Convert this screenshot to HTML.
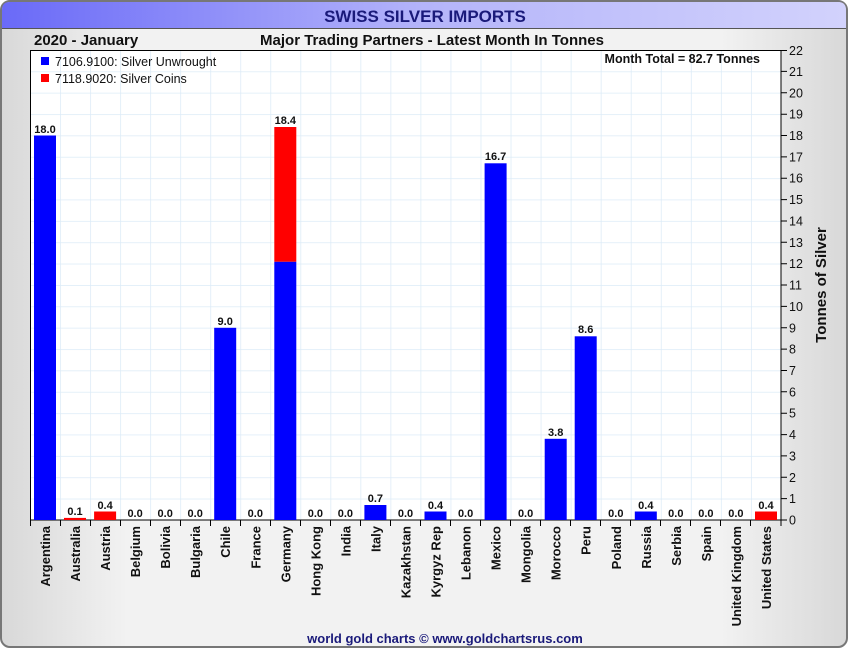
<!DOCTYPE html>
<html><head><meta charset="utf-8"><style>
html,body{margin:0;padding:0;background:#fff;}
svg{display:block;font-family:"Liberation Sans",Arial,sans-serif;}
</style></head><body>
<svg width="850" height="650" viewBox="0 0 850 650" xmlns="http://www.w3.org/2000/svg">
<defs>
<linearGradient id="bg" x1="0" y1="0" x2="1" y2="0">
<stop offset="0" stop-color="#d8d8d8"/><stop offset="0.15" stop-color="#f2f2f2"/><stop offset="0.85" stop-color="#f2f2f2"/><stop offset="1" stop-color="#d8d8d8"/></linearGradient>
<linearGradient id="tb" x1="0" y1="0" x2="1" y2="0">
<stop offset="0" stop-color="#6a6af8"/><stop offset="0.5" stop-color="#b4b4fa"/><stop offset="1" stop-color="#d2d2fc"/></linearGradient>
<pattern id="grid" patternUnits="userSpaceOnUse" x="30" y="50" width="30.04" height="21.364">
<rect width="30.04" height="21.364" fill="#fff"/>
<line x1="0" y1="0" x2="30.04" y2="0" stroke="#dcebf7" stroke-width="1.5"/>
<line x1="0" y1="0" x2="0" y2="21.364" stroke="#dcebf7" stroke-width="1.5"/>
</pattern>
</defs>
<rect x="1" y="1" width="846" height="646" rx="9" fill="url(#bg)" stroke="#777" stroke-width="2"/>
<path d="M2,28 L2,10 Q2,2 10,2 L838,2 Q846,2 846,10 L846,28 Z" fill="url(#tb)"/>
<line x1="2" y1="28.5" x2="846" y2="28.5" stroke="#555" stroke-width="1"/>
<text x="425" y="22" text-anchor="middle" font-size="17" font-weight="bold" fill="#1a1a7a">SWISS SILVER IMPORTS</text>
<text x="34" y="45" font-size="15" font-weight="bold" fill="#111">2020 - January</text>
<text x="432" y="45" text-anchor="middle" font-size="15" font-weight="bold" fill="#111">Major Trading Partners - Latest Month In Tonnes</text>

<rect x="30.5" y="50.5" width="750.5" height="469.5" fill="url(#grid)" stroke="#000" stroke-width="1"/>

<!-- legend -->
<rect x="41" y="57" width="8" height="8" fill="#00f"/>
<text x="55" y="66" font-size="12.5" fill="#111">7106.9100: Silver Unwrought</text>
<rect x="41" y="74" width="8" height="8" fill="#f00"/>
<text x="55" y="83" font-size="12.5" fill="#111">7118.9020: Silver Coins</text>
<text x="760" y="63" text-anchor="end" font-size="12.5" font-weight="bold" fill="#111">Month Total = 82.7 Tonnes</text>

<!-- bars -->
<g>
<rect x="34" y="135.5" width="22" height="384.5" fill="#00f"/>
<rect x="64" y="517.9" width="22" height="2.1" fill="#f00"/>
<rect x="94.1" y="511.5" width="22" height="8.5" fill="#f00"/>
<rect x="214.2" y="327.8" width="22" height="192.2" fill="#00f"/>
<rect x="274.3" y="261.7" width="22" height="258.3" fill="#00f"/>
<rect x="274.3" y="127" width="22" height="134.7" fill="#f00"/>
<rect x="364.4" y="505" width="22" height="15" fill="#00f"/>
<rect x="424.5" y="511.5" width="22" height="8.5" fill="#00f"/>
<rect x="484.6" y="163.3" width="22" height="356.7" fill="#00f"/>
<rect x="544.7" y="438.8" width="22" height="81.2" fill="#00f"/>
<rect x="574.7" y="336.3" width="22" height="183.7" fill="#00f"/>
<rect x="634.8" y="511.5" width="22" height="8.5" fill="#00f"/>
<rect x="755" y="511.5" width="22" height="8.5" fill="#f00"/>
</g>
<g font-size="11" font-weight="bold" fill="#111" text-anchor="middle">
<text x="45" y="133">18.0</text>
<text x="75" y="515">0.1</text>
<text x="105.1" y="509">0.4</text>
<text x="135.1" y="517">0.0</text>
<text x="165.2" y="517">0.0</text>
<text x="195.2" y="517">0.0</text>
<text x="225.2" y="325">9.0</text>
<text x="255.3" y="517">0.0</text>
<text x="285.3" y="124">18.4</text>
<text x="315.4" y="517">0.0</text>
<text x="345.4" y="517">0.0</text>
<text x="375.4" y="502">0.7</text>
<text x="405.5" y="517">0.0</text>
<text x="435.5" y="509">0.4</text>
<text x="465.6" y="517">0.0</text>
<text x="495.6" y="160">16.7</text>
<text x="525.6" y="517">0.0</text>
<text x="555.7" y="436">3.8</text>
<text x="585.7" y="333">8.6</text>
<text x="615.8" y="517">0.0</text>
<text x="645.8" y="509">0.4</text>
<text x="675.8" y="517">0.0</text>
<text x="705.9" y="517">0.0</text>
<text x="735.9" y="517">0.0</text>
<text x="766" y="509">0.4</text>
</g>

<!-- x ticks -->
<path d="M30.5,520v6M60.5,520v6M90.5,520v6M120.5,520v6M150.5,520v6M180.5,520v6M210.5,520v6M240.5,520v6M270.5,520v6M300.5,520v6M330.5,520v6M360.5,520v6M390.5,520v6M420.5,520v6M450.5,520v6M480.5,520v6M510.5,520v6M540.5,520v6M570.5,520v6M600.5,520v6M630.5,520v6M660.5,520v6M690.5,520v6M720.5,520v6M750.5,520v6M781,520v6" stroke="#000"/>
<g font-size="13" font-weight="bold" fill="#111" text-anchor="end">
<text transform="translate(50,526) rotate(-90)">Argentina</text>
<text transform="translate(80,526) rotate(-90)">Australia</text>
<text transform="translate(110.1,526) rotate(-90)">Austria</text>
<text transform="translate(140.1,526) rotate(-90)">Belgium</text>
<text transform="translate(170.2,526) rotate(-90)">Bolivia</text>
<text transform="translate(200.2,526) rotate(-90)">Bulgaria</text>
<text transform="translate(230.2,526) rotate(-90)">Chile</text>
<text transform="translate(260.3,526) rotate(-90)">France</text>
<text transform="translate(290.3,526) rotate(-90)">Germany</text>
<text transform="translate(320.4,526) rotate(-90)">Hong Kong</text>
<text transform="translate(350.4,526) rotate(-90)">India</text>
<text transform="translate(380.4,526) rotate(-90)">Italy</text>
<text transform="translate(410.5,526) rotate(-90)">Kazakhstan</text>
<text transform="translate(440.5,526) rotate(-90)">Kyrgyz Rep</text>
<text transform="translate(470.6,526) rotate(-90)">Lebanon</text>
<text transform="translate(500.6,526) rotate(-90)">Mexico</text>
<text transform="translate(530.6,526) rotate(-90)">Mongolia</text>
<text transform="translate(560.7,526) rotate(-90)">Morocco</text>
<text transform="translate(590.7,526) rotate(-90)">Peru</text>
<text transform="translate(620.8,526) rotate(-90)">Poland</text>
<text transform="translate(650.8,526) rotate(-90)">Russia</text>
<text transform="translate(680.8,526) rotate(-90)">Serbia</text>
<text transform="translate(710.9,526) rotate(-90)">Spain</text>
<text transform="translate(740.9,526) rotate(-90)">United Kingdom</text>
<text transform="translate(771,526) rotate(-90)">United States</text>
</g>

<!-- y axis -->
<path d="M781,520h6M781,498.6h6M781,477.3h6M781,455.9h6M781,434.6h6M781,413.2h6M781,391.8h6M781,370.5h6M781,349.1h6M781,327.8h6M781,306.4h6M781,285h6M781,263.7h6M781,242.3h6M781,221h6M781,199.6h6M781,178.2h6M781,156.9h6M781,135.5h6M781,114.2h6M781,92.8h6M781,71.4h6M781,50.5h6" stroke="#000"/>
<g font-size="12.5" fill="#111">
<text x="789" y="524.5">0</text><text x="789" y="503">1</text><text x="789" y="481.8">2</text><text x="789" y="460.4">3</text><text x="789" y="439">4</text><text x="789" y="417.7">5</text><text x="789" y="396.3">6</text><text x="789" y="375">7</text><text x="789" y="353.6">8</text><text x="789" y="332.3">9</text><text x="789" y="310.9">10</text><text x="789" y="289.5">11</text><text x="789" y="268.2">12</text><text x="789" y="246.8">13</text><text x="789" y="225.5">14</text><text x="789" y="204.1">15</text><text x="789" y="182.7">16</text><text x="789" y="161.4">17</text><text x="789" y="140">18</text><text x="789" y="118.7">19</text><text x="789" y="97.3">20</text><text x="789" y="75.9">21</text><text x="789" y="55">22</text>
</g>
<text transform="translate(826,285) rotate(-90)" text-anchor="middle" font-size="15" font-weight="bold" fill="#111">Tonnes of Silver</text>

<text x="445" y="643" text-anchor="middle" font-size="13" font-weight="bold" fill="#1a1a7a">world gold charts © www.goldchartsrus.com</text>
</svg>
</body></html>
